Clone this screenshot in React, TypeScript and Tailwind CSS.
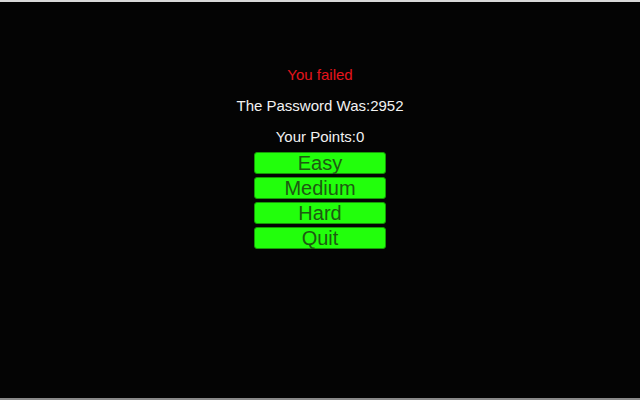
import React from "react";

const Btn = ({ label }: { label: string }) => (
  <button className="w-[132px] h-[22px] rounded-[3px] border border-[#169a06] bg-[#22ff0c] text-[#1e5a12] text-[20px] leading-[22px] flex items-center justify-center">
    {label}
  </button>
);

export default function App() {
  return (
    <div
      className="w-[640px] h-[400px] bg-[#040404] border-t-2 border-t-[#d8d8d8] border-b-2 border-b-[#8a8a8a] flex flex-col items-center"
      style={{ fontFamily: '"Liberation Sans", Arial, sans-serif' }}
    >
      <div className="mt-[64px] text-[15px] leading-[18px] text-[#e5141c]">You failed</div>
      <div className="mt-[13px] text-[15px] leading-[18px] text-[#f2f2f2]">The Password Was:2952</div>
      <div className="mt-[13px] text-[15px] leading-[18px] text-[#f2f2f2]">Your Points:0</div>
      <div className="mt-[6px] flex flex-col gap-[3px]">
        <Btn label="Easy" />
        <Btn label="Medium" />
        <Btn label="Hard" />
        <Btn label="Quit" />
      </div>
    </div>
  );
}
